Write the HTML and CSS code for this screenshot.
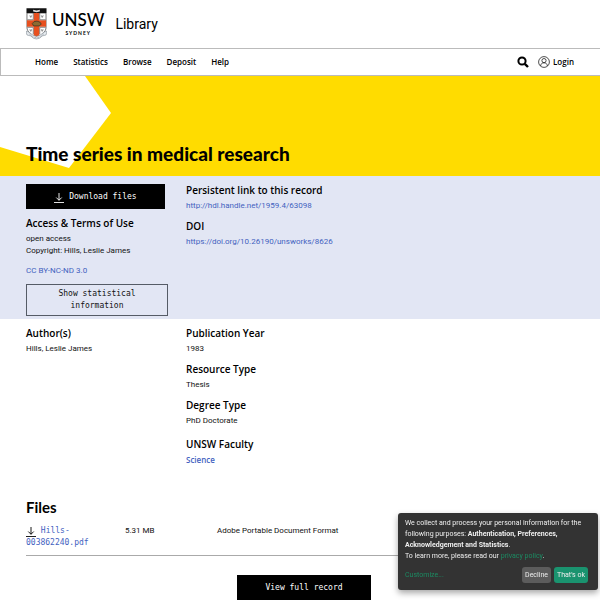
FILE: index.html
```html
<!DOCTYPE html>
<html lang="en">
<head>
    <meta charset="UTF-8">
    <meta name="viewport" content="width=device-width, initial-scale=1.0">
    <title>Time series in medical research</title>
    <link rel="stylesheet" href="styles.css">
</head>
<body>
    <header class="site-header">
        <a class="brand" href="#">
            <svg class="crest" viewBox="0 0 22 33" aria-hidden="true">
                <path d="M1 5h20v15c0 5-5 8-10 11C6 28 1 25 1 20z" fill="#fff" stroke="#333" stroke-width=".7"/>
                <path d="M8 5h6v24l-3 2-3-2zM1 12.500h20v7H1z" fill="#e8501f"/>
                <path d="M7.600 5v7H1.500M14.400 5v7h6.100M7.600 27v-7H1.500M14.400 27v-7h6.100" fill="none" stroke="#555" stroke-width=".7"/>
                <path d="M.5 0h21v5H.5z" fill="#111"/>
                <path d="M7.500 1.500l3.500.8 3.500-.8v2l-3.500.7-3.500-.7z" fill="#ddd"/>
                <path d="M4 7.500l1 1 1-1-.5 2h-1zM16 7.500l1 1 1-1-.5 2h-1zM4 22l1 1 1-1-.5 2h-1zM16 22l1 1 1-1-.5 2h-1z" fill="#777" stroke="#999" stroke-width=".6"/>
                <path d="M6.500 16l2-2 3-.5 3 1 1.500 2-2 2H8z" fill="#8b6b32" stroke="#3d3523" stroke-width=".8"/>
                <path d="M0 24l3 1 4 3 4 1.500 4-1.500 4-3 3-1-1 4-4 1-3 2.500-3 .7-3-.7L5 29l-4-1z" fill="#e9edf1" stroke="#7b858e" stroke-width=".6"/>
                <path d="M3 26.500l4 3.500 4 1 4-1 4-3.500" fill="none" stroke="#7b858e" stroke-width=".7" stroke-dasharray="1 .6"/>
            </svg>
            <span class="wordmark">
                <span class="wordmark-name">UNSW</span>
                <span class="wordmark-city">SYDNEY</span>
            </span>
            <span class="library">Library</span>
        </a>
    </header>

    <nav class="main-nav">
        <ul class="nav-links">
            <li><a href="#">Home</a></li>
            <li><a href="#">Statistics</a></li>
            <li><a href="#">Browse</a></li>
            <li><a href="#">Deposit</a></li>
            <li><a href="#">Help</a></li>
        </ul>
        <button class="search" type="button" aria-label="Search">
            <svg viewBox="0 0 12 12" fill="none" stroke="#000" stroke-width="2"><circle cx="5" cy="5" r="3.600"/><path d="M7.800 7.800l3.200 3.200" stroke-width="2.400"/></svg>
        </button>
        <a class="login" href="#">
            <svg viewBox="0 0 12 12" fill="none" stroke="#222" stroke-width=".8" aria-hidden="true"><circle cx="6" cy="6" r="5.400"/><circle cx="6" cy="4.600" r="2.100"/><path d="M2.600 10c.2-2 1.300-3.200 3.400-3.200S9.200 8 9.400 10"/></svg>
            Login
        </a>
    </nav>

    <div class="hero">
        <h1>Time series in medical research</h1>
    </div>

    <main>
        <section class="record access">
            <div>
                <button class="btn btn-download" type="button">
                    <svg class="icon-download" viewBox="0 0 11 11" fill="none" stroke="currentColor" aria-hidden="true"><path d="M5.500 0v8M2.500 5l3 3 3-3M0 10.500h11"/></svg>
                    Download files
                </button>
                <h2>Access &amp; Terms of Use</h2>
                <p>open access</p>
                <p>Copyright: Hills, Leslie James</p>
                <p class="licence"><a href="#">CC BY-NC-ND 3.0</a></p>
                <button class="btn btn-outline" type="button">Show statistical information</button>
            </div>
            <div>
                <div class="field">
                    <h2>Persistent link to this record</h2>
                    <p><a href="#">http://hdl.handle.net/1959.4/63098</a></p>
                </div>
                <div class="field">
                    <h2>DOI</h2>
                    <p><a href="#">https://doi.org/10.26190/unsworks/8626</a></p>
                </div>
            </div>
        </section>

        <section class="record details">
            <div class="field">
                <h2>Author(s)</h2>
                <p>Hills, Leslie James</p>
            </div>
            <div>
                <div class="field">
                    <h2>Publication Year</h2>
                    <p>1983</p>
                </div>
                <div class="field">
                    <h2>Resource Type</h2>
                    <p>Thesis</p>
                </div>
                <div class="field">
                    <h2>Degree Type</h2>
                    <p>PhD Doctorate</p>
                </div>
                <div class="field faculty">
                    <h2>UNSW Faculty</h2>
                    <p><a href="#">Science</a></p>
                </div>
            </div>
        </section>

        <section class="files">
            <h2 class="files-title">Files</h2>
            <table>
                <tr>
                    <td class="file-name"><a href="#"><svg class="icon-download" viewBox="0 0 11 11" fill="none" stroke="#000" aria-hidden="true"><path d="M5.500 0v8M2.500 5l3 3 3-3M0 10.500h11"/></svg> Hills-003862240.pdf</a></td>
                    <td class="file-size">5.31 MB</td>
                    <td>Adobe Portable Document Format</td>
                </tr>
            </table>
            <button class="btn btn-full" type="button">View full record</button>
        </section>
    </main>

    <div class="cookie-notice" role="dialog" aria-label="Cookie consent">
        <p>We collect and process your personal information for the following purposes: <strong>Authentication, Preferences, Acknowledgement and Statistics</strong>.<br>To learn more, please read our <a href="#">privacy policy</a>.</p>
        <div class="cookie-actions">
            <a href="#">Customize...</a>
            <button class="decline" type="button">Decline</button>
            <button class="accept" type="button">That's ok</button>
        </div>
    </div>
</body>
</html>
```
FILE: styles.css
```css
* {
    box-sizing: border-box;
}

body {
    margin: 0;
    background-color: #fff;
    color: #111;
    font-family: Roboto, "Liberation Sans", sans-serif;
    font-size: 8px;
    line-height: 12px;
}

h1, h2, p, ul {
    margin: 0;
    padding: 0;
}

a {
    color: #4362bf;
    text-decoration: none;
}

button {
    cursor: pointer;
}

.site-header {
    display: flex;
    height: 48px;
    padding: 8px 26px;
}

.brand {
    display: flex;
    align-items: flex-start;
    color: #000;
}

.crest {
    width: 21px;
    height: 32px;
    margin-right: 5px;
}

.wordmark {
    display: flex;
    flex-direction: column;
    align-items: center;
    padding-top: 2px;
}

.wordmark-name {
    font-family: Lato, sans-serif;
    font-size: 17px;
    font-weight: 500;
    line-height: 20px;
}

.wordmark-city {
    font-family: Lato, sans-serif;
    font-size: 5px;
    font-weight: 700;
    letter-spacing: 1px;
    line-height: 6px;
}

.library {
    margin-left: 11px;
    font-size: 14px;
    line-height: 32px;
}

.main-nav {
    display: flex;
    align-items: center;
    height: 28px;
    padding: 0 26px 0 34px;
    border: 1px solid #bbb;
    border-right: 0;
    font-family: "Open Sans", sans-serif;
    font-weight: 600;
}

.main-nav a {
    color: #000;
}

.nav-links {
    display: flex;
    gap: 15px;
    margin-right: auto;
    list-style: none;
}

.search {
    width: 12px;
    height: 12px;
    margin-right: 9px;
    padding: 0;
    border: 0;
    background: none;
}

.search svg,
.login svg {
    display: block;
    width: 12px;
    height: 12px;
}

.login {
    display: flex;
    align-items: center;
    gap: 3px;
}

.hero {
    position: relative;
    display: flex;
    align-items: flex-end;
    height: 100px;
    padding: 0 26px 11px;
    background-color: #ffdc00;
}

.hero::before {
    content: "";
    position: absolute;
    top: 0;
    left: 0;
    width: 111px;
    height: 92px;
    background-color: #fff;
    clip-path: polygon(0 0, 85px 0, 111px 37px, 69px 92px, 0 71px);
}

.hero h1 {
    position: relative;
    color: #000;
    font-family: Lato, sans-serif;
    font-size: 19px;
    font-weight: 900;
    line-height: 22px;
}

.record {
    display: grid;
    grid-template-columns: 142px 1fr;
    gap: 18px;
    padding: 6px 26px 3px;
}

.record h2 {
    margin-bottom: 2px;
    color: #000;
    font-family: "Open Sans", sans-serif;
    font-size: 10px;
    font-weight: 600;
    line-height: 16px;
}

.field {
    margin-bottom: 6px;
}

.access {
    background-color: #e2e6f4;
}

.licence {
    margin: 8px 0 7px;
}

.btn {
    display: block;
    padding: 0;
    border: 0;
    border-radius: 0;
    background-color: #000;
    color: #fff;
    font-family: "DejaVu Sans Mono", monospace;
    font-size: 8px;
    line-height: 12px;
}

.btn-download {
    width: 139px;
    height: 25px;
    margin: 2px 0 6px;
}

.icon-download {
    width: 10px;
    height: 10px;
    vertical-align: -4px;
}

.btn-outline {
    width: 100%;
    padding: 3px 24px;
    border: 1px solid #555b66;
    background-color: transparent;
    color: #111;
}

.faculty {
    margin-top: 9px;
}

.faculty a {
    font-family: "Open Sans", sans-serif;
    font-weight: 600;
}

.files {
    padding: 21px 18px 0 26px;
}

.files-title {
    margin-bottom: 8px;
    color: #000;
    font-family: Lato, sans-serif;
    font-size: 15px;
    font-weight: 700;
    line-height: 20px;
}

table {
    width: 100%;
    border-collapse: collapse;
    border-bottom: 1px solid #aaa;
}

td {
    padding: 0 0 6px;
    vertical-align: top;
}

.file-name {
    width: 99px;
    padding-right: 30px;
    font-family: "DejaVu Sans Mono", monospace;
}

.file-size {
    width: 92px;
}

.btn-full {
    width: 134px;
    height: 25px;
    margin: 19px auto 0;
}

.cookie-notice {
    position: fixed;
    right: 2px;
    bottom: 10px;
    width: 200px;
    padding: 5px 10px 7px 7px;
    border-radius: 3px;
    background-color: #333;
    box-shadow: 0 3px 6px rgba(0, 0, 0, 0.35);
    color: #eee;
    font-size: 7px;
    line-height: 11px;
}

.cookie-notice a {
    color: #1c8a62;
}

.cookie-actions {
    display: flex;
    align-items: center;
    gap: 3px;
    margin-top: 5px;
}

.cookie-actions a {
    margin-right: auto;
}

.cookie-actions button {
    padding: 3px;
    border: 0;
    border-radius: 3px;
    color: #eee;
    font-family: inherit;
    font-size: 7px;
    line-height: 10px;
}

.decline {
    background-color: #5c5c5c;
}

.accept {
    background-color: #1a936f;
}
```
